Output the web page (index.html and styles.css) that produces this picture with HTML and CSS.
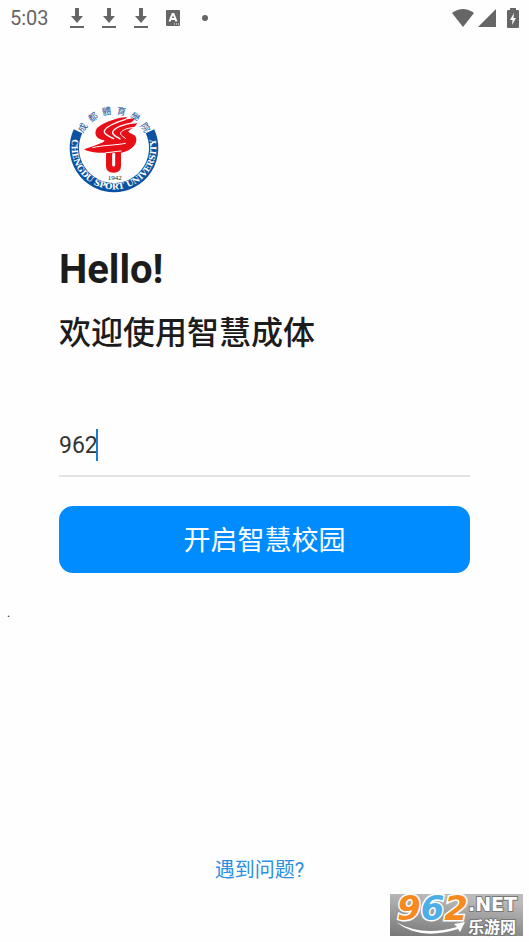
FILE: index.html
```html
<!DOCTYPE html>
<html lang="zh-CN">
<head>
    <meta charset="UTF-8">
    <meta name="viewport" content="width=device-width, initial-scale=1.0">
    <title>智慧成体</title>
    <link rel="stylesheet" href="styles.css">
</head>
<body>
    <div class="screen">
        <!-- Status bar -->
        <div class="status-bar">
            <span class="clock">5:03</span>
            <div class="notifications">
                <svg class="icon-download" viewBox="0 0 16 20"><path d="M6 0h4v8h4l-6 7-6-7h4z"/><path d="M1 18h14v2H1z"/></svg>
                <svg class="icon-download" viewBox="0 0 16 20"><path d="M6 0h4v8h4l-6 7-6-7h4z"/><path d="M1 18h14v2H1z"/></svg>
                <svg class="icon-download" viewBox="0 0 16 20"><path d="M6 0h4v8h4l-6 7-6-7h4z"/><path d="M1 18h14v2H1z"/></svg>
                <svg class="icon-app" viewBox="0 0 16 16"><rect x="1" y="0" width="14" height="16" rx="1"/><path d="M4.5 11.500L7.500 4h1l3 7.500M5.800 9h4.400" fill="none" stroke="#fff" stroke-width="2"/><path d="M9 14h5" stroke="#fff" stroke-dasharray="1 1"/></svg>
                <span class="dot"></span>
            </div>
            <div class="system">
                <svg class="icon-wifi" viewBox="0 0 22 18"><path d="M0 4Q11-4 22 4L11 18z"/></svg>
                <svg class="icon-signal" viewBox="0 0 18 18"><path d="M18 0v18H0z"/></svg>
                <svg class="icon-battery" viewBox="0 0 12 20"><path d="M3 2V0h6v2h2q1 0 1 1v16q0 1-1 1H1q-1 0-1-1V3q0-1 1-1z"/><path d="M7 5l-4 7h2.500L5 17l4-7H6.500z" fill="#fff"/></svg>
            </div>
        </div>

        <main class="login">
            <!-- University crest -->
            <svg class="crest" viewBox="-3 0 330 330" role="img" aria-label="成都體育學院">
                <defs>
                    <path id="arc-top" d="M60 159a102 102 0 0 1 204 0"/>
                    <path id="arc-bottom" d="M45 107A127 127 0 1 0 279 107"/>
                </defs>
                <path d="M54 109A119 119 0 1 0 270 109" fill="none" stroke="#0b53a2" stroke-width="28"/>
                <text class="crest-name"><textPath href="#arc-top" startOffset="50%">成&nbsp;&nbsp;都&nbsp;&nbsp;體&nbsp;&nbsp;育&nbsp;&nbsp;學&nbsp;&nbsp;院</textPath></text>
                <text class="crest-latin"><textPath href="#arc-bottom" startOffset="50%">CHENGDU SPORT UNIVERSITY</textPath></text>
                <path d="M200 66C170 68 118 85 108 105c-6 16 4 27 24 31 8 4-15 12-60 27 12 8 40 12 66 10v40q0 20 23 20 22 0 22-20v-40c28-5 48-23 46-42-1-14-18-14-24-21 3-8 23-12 26-26-8 2-16 2-20 1 5-4 10-8 11-15-10 2-20 3-26 2 3-2 5-4 4-6z" fill="#e60f18"/>
                <g fill="none" stroke="#fff" stroke-linecap="round">
                    <path d="M197 73C168 82 137 94 133 108c-2 12 19 17 28 23" stroke-width="4"/>
                    <path d="M221 83C193 87 163 98 158 111c-2 11 16 15 22 21" stroke-width="4"/>
                    <path d="M228 97C205 98 187 104 182 113c-2 9 10 12 15 18" stroke-width="3"/>
                    <path d="M98 158c30-8 72-7 98-13" stroke-width="3"/>
                    <path d="M138 173c18-1 30-4 45-5" stroke-width="3"/>
                    <path d="M161 178v32" stroke-width="9"/>
                </g>
                <text class="crest-year" x="164" y="254">1942</text>
            </svg>

            <h1 class="greeting">Hello!</h1>
            <h2 class="welcome">欢迎使用智慧成体</h2>

            <form class="school-form">
                <div class="field">
                    <input class="field-input" type="text" value="962" aria-label="学校">
                    <span class="caret"></span>
                </div>
                <button class="start-button" type="button">开启智慧校园</button>
            </form>
        </main>

        <div class="mark">.</div>

        <footer class="footer">
            <a class="help-link" href="#">遇到问题?</a>
        </footer>

        <!-- Site badge -->
        <svg class="badge" viewBox="0 0 133 42" role="img" aria-label="962.NET 乐游网">
            <defs>
                <linearGradient id="badge-bg" x1="0" y1="1" x2="0.3" y2="0">
                    <stop offset="0" stop-color="#777"/>
                    <stop offset="1" stop-color="#bbb"/>
                </linearGradient>
            </defs>
            <rect width="133" height="42" fill="url(#badge-bg)"/>
            <path d="M6 28Q32 43 67 33l-3-3 11-2-5 10-2-3Q30 47 6 28z" fill="#fff"/>
            <text class="badge-number" x="7" y="26"><tspan fill="#f58a1f">9</tspan><tspan fill="#4eaee8">6</tspan><tspan fill="#f58a1f">2</tspan></text>
            <text class="badge-net" x="78" y="17">.NET</text>
            <text class="badge-site" x="78" y="39">乐游网</text>
        </svg>
    </div>
</body>
</html>
```
FILE: styles.css
```css
* {
    margin: 0;
    padding: 0;
    box-sizing: border-box;
}

body {
    font-family: Roboto, 'Noto Sans CJK SC', sans-serif;
    background: #fefefe;
    color: #1c1c1c;
}

.screen {
    position: relative;
    display: flex;
    flex-direction: column;
    min-height: 100vh;
}

/* Status bar */
.status-bar {
    display: flex;
    align-items: center;
    height: 36px;
    padding: 0 10px;
    color: #666;
}

.status-bar svg {
    fill: #666;
}

.clock {
    font-size: 20px;
    line-height: 24px;
}

.notifications {
    display: flex;
    align-items: center;
    gap: 16px;
    margin-left: 20px;
}

.icon-download {
    width: 16px;
    height: 20px;
}

.icon-app {
    width: 16px;
    height: 16px;
}

.dot {
    width: 6px;
    height: 6px;
    margin-left: 5px;
    border-radius: 50%;
    background: #666;
}

.system {
    display: flex;
    align-items: center;
    margin-left: auto;
    gap: 4px;
}

.icon-wifi {
    width: 22px;
    height: 18px;
}

.icon-signal {
    width: 18px;
    height: 18px;
}

.icon-battery {
    width: 12px;
    height: 20px;
    margin-left: 7px;
}

/* Login */
.login {
    display: flex;
    flex-direction: column;
    padding: 59px 59px 0;
}

.crest {
    width: 110px;
    height: 110px;
}

.crest-name {
    font-family: 'Noto Sans CJK TC', sans-serif;
    font-size: 28px;
    fill: #24599c;
    text-anchor: middle;
}

.crest-latin {
    font-family: 'DejaVu Serif', serif;
    font-size: 25px;
    font-weight: 700;
    fill: #fff;
    text-anchor: middle;
}

.crest-year {
    font-family: 'Liberation Serif', serif;
    font-size: 21px;
    fill: #222;
    text-anchor: middle;
}

.greeting {
    margin-top: 41px;
    font-size: 40px;
    line-height: 48px;
    font-weight: 700;
}

.welcome {
    margin-top: 15px;
    font-size: 32px;
    line-height: 48px;
    font-weight: 500;
}

.school-form {
    display: flex;
    flex-direction: column;
    gap: 29px;
    margin-top: 58px;
}

.field {
    position: relative;
    border-bottom: 2px solid #e3e3e3;
}

.field-input {
    display: block;
    width: 100%;
    height: 60px;
    border: none;
    outline: none;
    background: transparent;
    color: #333;
    font-family: inherit;
    font-size: 23px;
}

.caret {
    position: absolute;
    left: 37px;
    top: 14px;
    width: 2px;
    height: 32px;
    background: #1a80d4;
}

.start-button {
    height: 67px;
    padding-bottom: 2px;
    border: none;
    border-radius: 14px;
    background: #008cff;
    color: #fff;
    font-family: inherit;
    font-size: 27px;
}

.mark {
    margin-top: 32px;
    padding-left: 7px;
    font-size: 12px;
    line-height: 16px;
}

.footer {
    margin-top: auto;
    padding: 0 10px 58px 0;
    text-align: center;
}

.help-link {
    color: #2b90e0;
    font-size: 20px;
    line-height: 28px;
    text-decoration: none;
}

/* Site badge */
.badge {
    position: absolute;
    right: 6px;
    bottom: 6px;
    width: 133px;
    height: 42px;
    overflow: visible;
}

.badge-number {
    font-family: 'DejaVu Sans', sans-serif;
    font-size: 34px;
    font-weight: 700;
    font-style: italic;
    stroke: #fff;
    stroke-width: 3px;
    paint-order: stroke;
}

.badge-net,
.badge-site {
    fill: #fff;
    stroke: #777;
    stroke-width: 2px;
    paint-order: stroke;
    font-weight: 700;
}

.badge-net {
    font-family: 'DejaVu Sans', sans-serif;
    font-size: 19px;
}

.badge-site {
    font-family: 'Noto Sans CJK SC', sans-serif;
    font-size: 16px;
}
```
